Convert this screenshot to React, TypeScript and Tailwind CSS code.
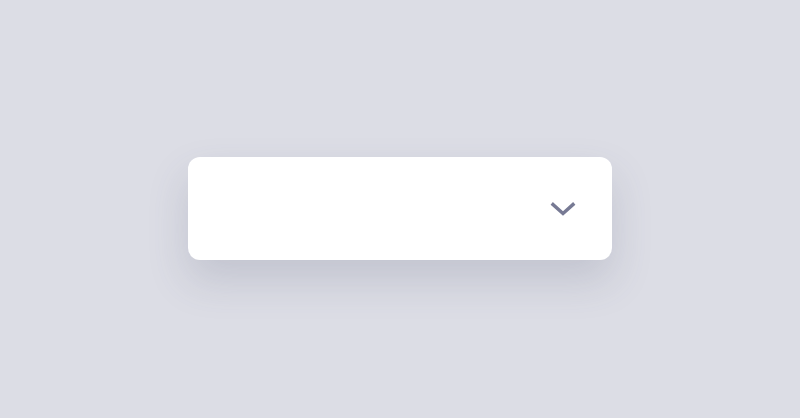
import React from "react";

export default function App() {
  return (
    <div className="flex h-[418px] w-full items-center justify-center bg-[#dcdde5] pb-[2px]">
      <div className="flex h-[103px] w-[424px] items-center justify-end rounded-xl bg-white pr-[36px] shadow-[0_20px_40px_rgba(80,84,110,0.18)]">
        <svg width="26" height="16" viewBox="0 0 26 16" fill="none" className="mt-[1px]">
          <path
            d="M3 3.5 L13 12.5 L23 3.5"
            stroke="#777a94"
            strokeWidth="3.4"
            strokeLinecap="square"
          />
        </svg>
      </div>
    </div>
  );
}
